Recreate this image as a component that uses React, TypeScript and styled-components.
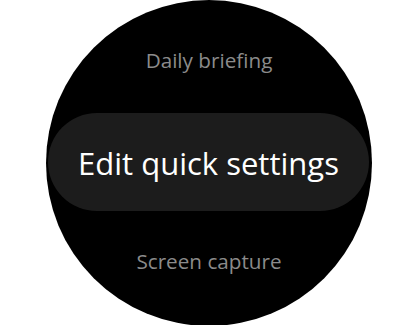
import React from "react";
import styled, { createGlobalStyle } from "styled-components";

const Global = createGlobalStyle`
  html, body { margin: 0; padding: 0; background: #ffffff; }
  body { font-family: "Open Sans", "Noto Sans", sans-serif; }
`;

const Page = styled.div`
  width: 420px;
  height: 325px;
  display: flex;
  align-items: center;
  padding-left: 46px;
  box-sizing: border-box;
  overflow: hidden;
`;

const Watch = styled.div`
  width: 326px;
  height: 326px;
  border-radius: 50%;
  background: #000000;
  overflow: hidden;
  display: grid;
  grid-template-rows: 113px 98px 1fr;
`;

const Slot = styled.div<{ $pad: number }>`
  display: flex;
  justify-content: center;
  align-items: flex-start;
  padding-top: ${(p) => p.$pad}px;
`;

const Label = styled.span`
  font-family: "Open Sans", "Noto Sans", sans-serif;
  font-size: 20.7px;
  line-height: 24px;
  color: #8b8b8b;
`;

const Pill = styled.div`
  margin: 0 3px 0 2px;
  border-radius: 49px;
  background: #1c1c1c;
  display: flex;
  align-items: center;
  justify-content: center;
`;

const Focus = styled.span`
  font-family: "Open Sans", "Noto Sans", sans-serif;
  font-size: 31px;
  line-height: 36px;
  color: #ffffff;
  padding-top: 2px;
`;

export default function App() {
  return (
    <>
      <Global />
      <Page>
        <Watch>
          <Slot $pad={48}>
            <Label>Daily briefing</Label>
          </Slot>
          <Pill>
            <Focus>Edit quick settings</Focus>
          </Pill>
          <Slot $pad={38}>
            <Label>Screen capture</Label>
          </Slot>
        </Watch>
      </Page>
    </>
  );
}
